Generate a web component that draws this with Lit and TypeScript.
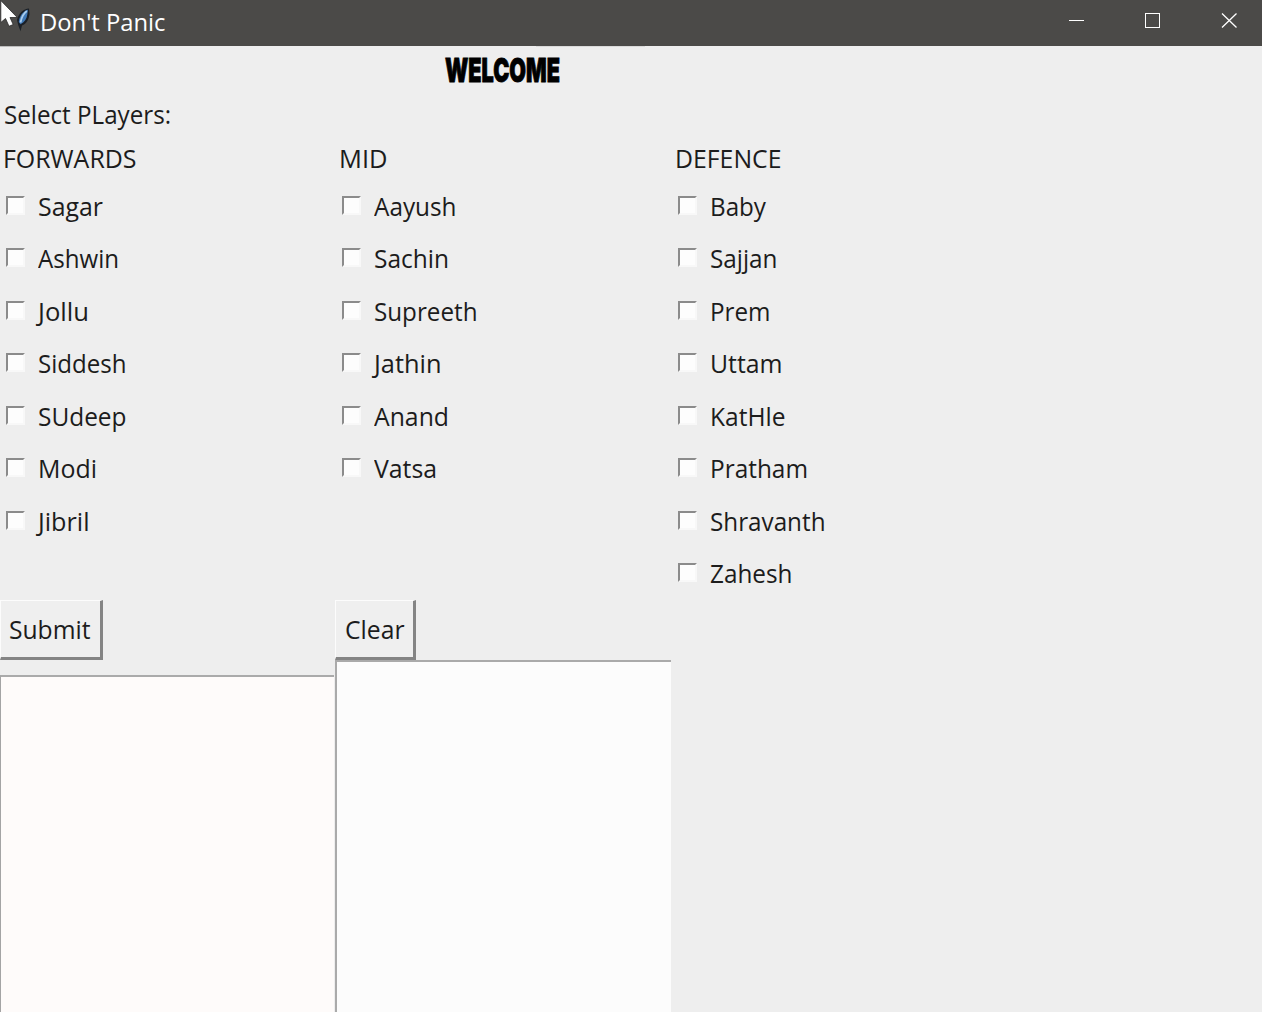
import { LitElement, html, svg, css } from "lit";
import { customElement, property } from "lit/decorators.js";

/** Text drawn on one line and condensed to a given advance width. */
@customElement("fit-text")
class FitText extends LitElement {
  @property() text = "";
  @property({ type: Number }) width = 0;

  static styles = css`
    :host { display: block; white-space: nowrap; }
    .run { display: inline-block; transform-origin: 0 50%; }
  `;

  firstUpdated() {
    const run = this.renderRoot.querySelector(".run") as HTMLElement;
    const natural = run.getBoundingClientRect().width;
    if (natural > 0) run.style.transform = `scaleX(${this.width / natural})`;
  }

  render() {
    return html`<span class="run">${this.text}</span>`;
  }
}

type Item = [string, number];
interface Group { title: string; width: number; players: Item[]; }

const GROUPS: Group[] = [
  {
    title: "FORWARDS", width: 133.5,
    players: [["Sagar", 65], ["Ashwin", 81], ["Jollu", 51], ["Siddesh", 88.5], ["SUdeep", 88.5], ["Modi", 59], ["Jibril", 51.5]],
  },
  {
    title: "MID", width: 48.5,
    players: [["Aayush", 82.5], ["Sachin", 75], ["Supreeth", 103.5], ["Jathin", 67.5], ["Anand", 75], ["Vatsa", 63]],
  },
  {
    title: "DEFENCE", width: 106.5,
    players: [["Baby", 56], ["Sajjan", 67.5], ["Prem", 60.5], ["Uttam", 72.5], ["KatHle", 75.5], ["Pratham", 98], ["Shravanth", 115.5], ["Zahesh", 82.5]],
  },
];

@customElement("app-root")
class AppRoot extends LitElement {
  static styles = css`
    :host {
      display: flex; flex-direction: column; position: relative;
      width: 1262px; height: 1012px; overflow: hidden;
      background: #eeeeee; color: #1c1c1c;
      font: 25px/36px "Open Sans", "Noto Sans", sans-serif;
    }
    .titlebar {
      flex: none; display: flex; height: 46px; box-sizing: border-box;
      background: #4b4a48; color: #fff; padding-left: 12px;
    }
    .feather { flex: none; width: 18px; height: 24px; margin-top: 8px; }
    .name { flex: 1; margin-left: 9.5px; padding-top: 4px; font-size: 24px; }
    .controls { display: flex; }
    .controls svg { width: 76.5px; height: 46px; display: block; }
    .pointer { position: absolute; left: 0; top: 0; width: 20px; height: 30px; }
    .edge { flex: none; display: flex; height: 1px; }
    .edge .a { width: 80px; background: #bdbdbd; }
    .edge .b { width: 109px; margin-left: 456px; background: #dadada; }
    .welcome {
      flex: none; height: 50px; padding-left: 445px; box-sizing: border-box;
      font: 900 33px/46px Inter, Roboto, sans-serif; color: #000;
      -webkit-text-stroke: 0.9px #000;
    }
    .prompt { flex: none; height: 43.6px; padding-left: 3.5px; margin-top: -0.6px; }
    .groups { flex: none; height: 460px; display: grid; grid-template-columns: repeat(3, 336px); }
    .group-title { padding-left: 3px; height: 45.8px; }
    .player { display: flex; height: 52.5px; align-items: flex-start; padding-left: 6px; }
    .box {
      flex: none; width: 15px; height: 15px; margin-top: 10px; background: #fdfdfd;
      border: 2px solid; border-color: #8b8b8b #f8f8f8 #f8f8f8 #8b8b8b;
    }
    .player fit-text { margin-left: 13px; padding-top: 2px; }
    .bottom { flex: 1; display: grid; grid-template-columns: 335px 336px; }
    .cell { display: flex; flex-direction: column; align-items: flex-start; }
    .button {
      flex: none; height: 60px; box-sizing: border-box; padding: 0 0 1px 8px;
      margin: 0; text-align: left; font: inherit; color: inherit; background: #efefef;
      border: solid; border-width: 1px 3px 3px 1px; border-color: #fcfcfc #848484 #848484 #fcfcfc;
      border-radius: 0; display: block;
    }
    .submit { width: 103px; }
    .clear { width: 81px; padding-left: 9px; }
    .area { flex: 1; box-sizing: border-box; border-top: 2px solid #aaa; border-left: 1px solid #a4a4a4; }
    .area.left { width: 334px; margin-top: 15px; background: #fefbfa; }
    .area.right { width: 336px; border-left-width: 2px; border-left-color: #aaa; background: #fcfcfc; }
  `;

  private group(g: Group) {
    return html`<div>
      <div class="group-title"><fit-text .text=${g.title} .width=${g.width}></fit-text></div>
      ${g.players.map(([name, width]) => html`<label class="player">
        <span class="box"></span><fit-text .text=${name} .width=${width}></fit-text>
      </label>`)}
    </div>`;
  }

  private control(shape: unknown) {
    return html`<svg viewBox="0 0 76.5 46" fill="none" stroke="#fff">${shape}</svg>`;
  }

  render() {
    return html`
      <div class="titlebar">
        <svg class="feather" viewBox="0 0 18 24">
          <path d="M17 .4C11.500 .8 6.500 5 5 12l1.200 5 2.300 6.300 1.500-5.800c4.500-1.500 7-6.500 7.500-11.500z" fill="#1b2027"/>
          <path d="M16 1.800C11.500 3 7.500 7.500 6.800 14l1.700 2.200c4-2 6.300-5.500 6.800-9.700z" fill="#3f78b6"/>
          <path d="M14.800 3C11.500 5.500 9.500 9 8.500 14.500" fill="none" stroke="#a9cdee" stroke-width="1.800"/>
        </svg>
        <div class="name"><fit-text .text=${"Don't Panic"} .width=${125.5}></fit-text></div>
        <div class="controls">
          ${this.control(svg`<path d="M36 20.500h15"/>`)}
          ${this.control(svg`<rect x="36.500" y="13.500" width="14" height="14"/>`)}
          ${this.control(svg`<path d="M36 13.500l14.500 14M50.500 13.500L36 27.500" stroke-width="1.300"/>`)}
        </div>
      </div>
      <div class="edge"><div class="a"></div><div class="b"></div></div>
      <div class="welcome"><fit-text .text=${"WELCOME"} .width=${115}></fit-text></div>
      <div class="prompt"><fit-text .text=${"Select PLayers:"} .width=${167}></fit-text></div>
      <div class="groups">${GROUPS.map((g) => this.group(g))}</div>
      <div class="bottom">
        <div class="cell">
          <button class="button submit"><fit-text .text=${"Submit"} .width=${81.5}></fit-text></button>
          <div class="area left"></div>
        </div>
        <div class="cell">
          <button class="button clear"><fit-text .text=${"Clear"} .width=${59.5}></fit-text></button>
          <div class="area right"></div>
        </div>
      </div>
      <svg class="pointer" viewBox="0 0 20 30">
        <path d="M.8 .5V22.500L5.500 18.500 9 26.300 13.200 24.500 10 17.500H17.300z" fill="#fff" stroke="#2a2a2a" stroke-width=".8"/>
      </svg>
    `;
  }
}
